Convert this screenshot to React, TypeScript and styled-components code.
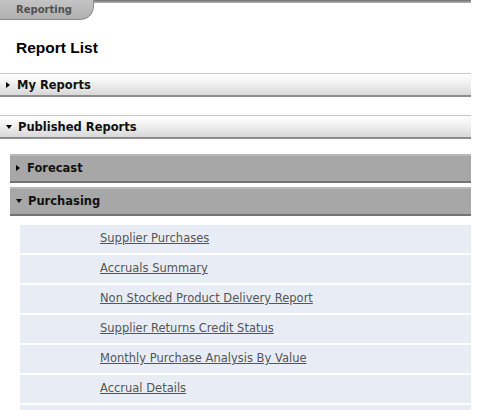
import React from 'react';
import styled, { createGlobalStyle } from 'styled-components';

const Global = createGlobalStyle`
  html, body {
    margin: 0;
    padding: 0;
    background: #fff;
    font-family: "DejaVu Sans", Verdana, sans-serif;
  }
`;

const Page = styled.div`
  width: 471px;
`;

const TabBar = styled.div`
  display: flex;
  height: 20px;
`;

const Tab = styled.div`
  width: 94px;
  height: 20px;
  box-sizing: border-box;
  background: linear-gradient(#c4c4c4, #b0b0b0);
  border-right: 1px solid #8a8a8a;
  border-bottom: 1px solid #8a8a8a;
  border-bottom-right-radius: 14px;
  color: #505050;
  font-size: 10px;
  font-weight: bold;
  padding-left: 16px;
  line-height: 20px;
`;

const TabLine = styled.div`
  flex: 1;
  height: 3px;
  background: linear-gradient(#6e6e6e, #b8b8b8);
`;

const Title = styled.h1`
  margin: 0;
  padding: 19px 0 0 16px;
  height: 53px;
  box-sizing: border-box;
  font-family: "Liberation Sans", Arial, sans-serif;
  font-size: 15.5px;
  font-weight: bold;
  color: #000;
`;

const SectionHeader = styled.div<{ $gap?: number }>`
  display: flex;
  align-items: center;
  height: 24px;
  box-sizing: border-box;
  margin-top: ${p => p.$gap ?? 0}px;
  border-top: 1px solid #c8c8c8;
  border-bottom: 2px solid #8c8c8c;
  background: linear-gradient(#ffffff, #f2f2f2 40%, #d8d8d8);
  font-size: 11.5px;
  font-weight: bold;
  color: #111;
`;

const SubSection = styled.div`
  margin-left: 10px;
  margin-top: 15px;
  display: flex;
  flex-direction: column;
  gap: 4px;
`;

const GroupHeader = styled.div`
  display: flex;
  align-items: center;
  height: 29px;
  box-sizing: border-box;
  background: #a7a7a7;
  border-top: 2px solid #b8b8b8;
  border-bottom: 2px solid #747474;
  font-size: 11.5px;
  font-weight: bold;
  color: #111;
  padding-bottom: 1px;
`;

const Caret = styled.span<{ $open?: boolean; $indent: number }>`
  display: inline-block;
  width: 0;
  height: 0;
  margin-left: ${p => p.$indent}px;
  margin-right: ${p => (p.$open ? 6 : 7)}px;
  ${p =>
    p.$open
      ? `border-left: 3.5px solid transparent;
         border-right: 3.5px solid transparent;
         border-top: 4px solid #000;`
      : `border-top: 3.5px solid transparent;
         border-bottom: 3.5px solid transparent;
         border-left: 4px solid #000;`}
`;

const List = styled.div`
  margin: 9px 0 0 20px;
  display: flex;
  flex-direction: column;
  gap: 2px;
`;

const Row = styled.div`
  height: 28px;
  box-sizing: border-box;
  display: flex;
  align-items: center;
  padding: 0 0 2px 80px;
  background: #e8edf5;
`;

const Link = styled.a`
  color: #555;
  font-size: 11.5px;
  text-decoration: underline;
  cursor: pointer;
`;

const reports = [
  'Supplier Purchases',
  'Accruals Summary',
  'Non Stocked Product Delivery Report',
  'Supplier Returns Credit Status',
  'Monthly Purchase Analysis By Value',
  'Accrual Details',
];

export default function App() {
  return (
    <Page>
      <Global />
      <TabBar>
        <Tab>Reporting</Tab>
        <TabLine />
      </TabBar>
      <Title>Report List</Title>
      <SectionHeader>
        <Caret $indent={6} />
        My Reports
      </SectionHeader>
      <SectionHeader $gap={18}>
        <Caret $indent={6} $open />
        Published Reports
      </SectionHeader>
      <SubSection>
        <GroupHeader>
          <Caret $indent={6} />
          Forecast
        </GroupHeader>
        <GroupHeader>
          <Caret $indent={6} $open />
          Purchasing
        </GroupHeader>
      </SubSection>
      <List>
        {reports.map(r => (
          <Row key={r}>
            <Link>{r}</Link>
          </Row>
        ))}
        <Row />
      </List>
    </Page>
  );
}
